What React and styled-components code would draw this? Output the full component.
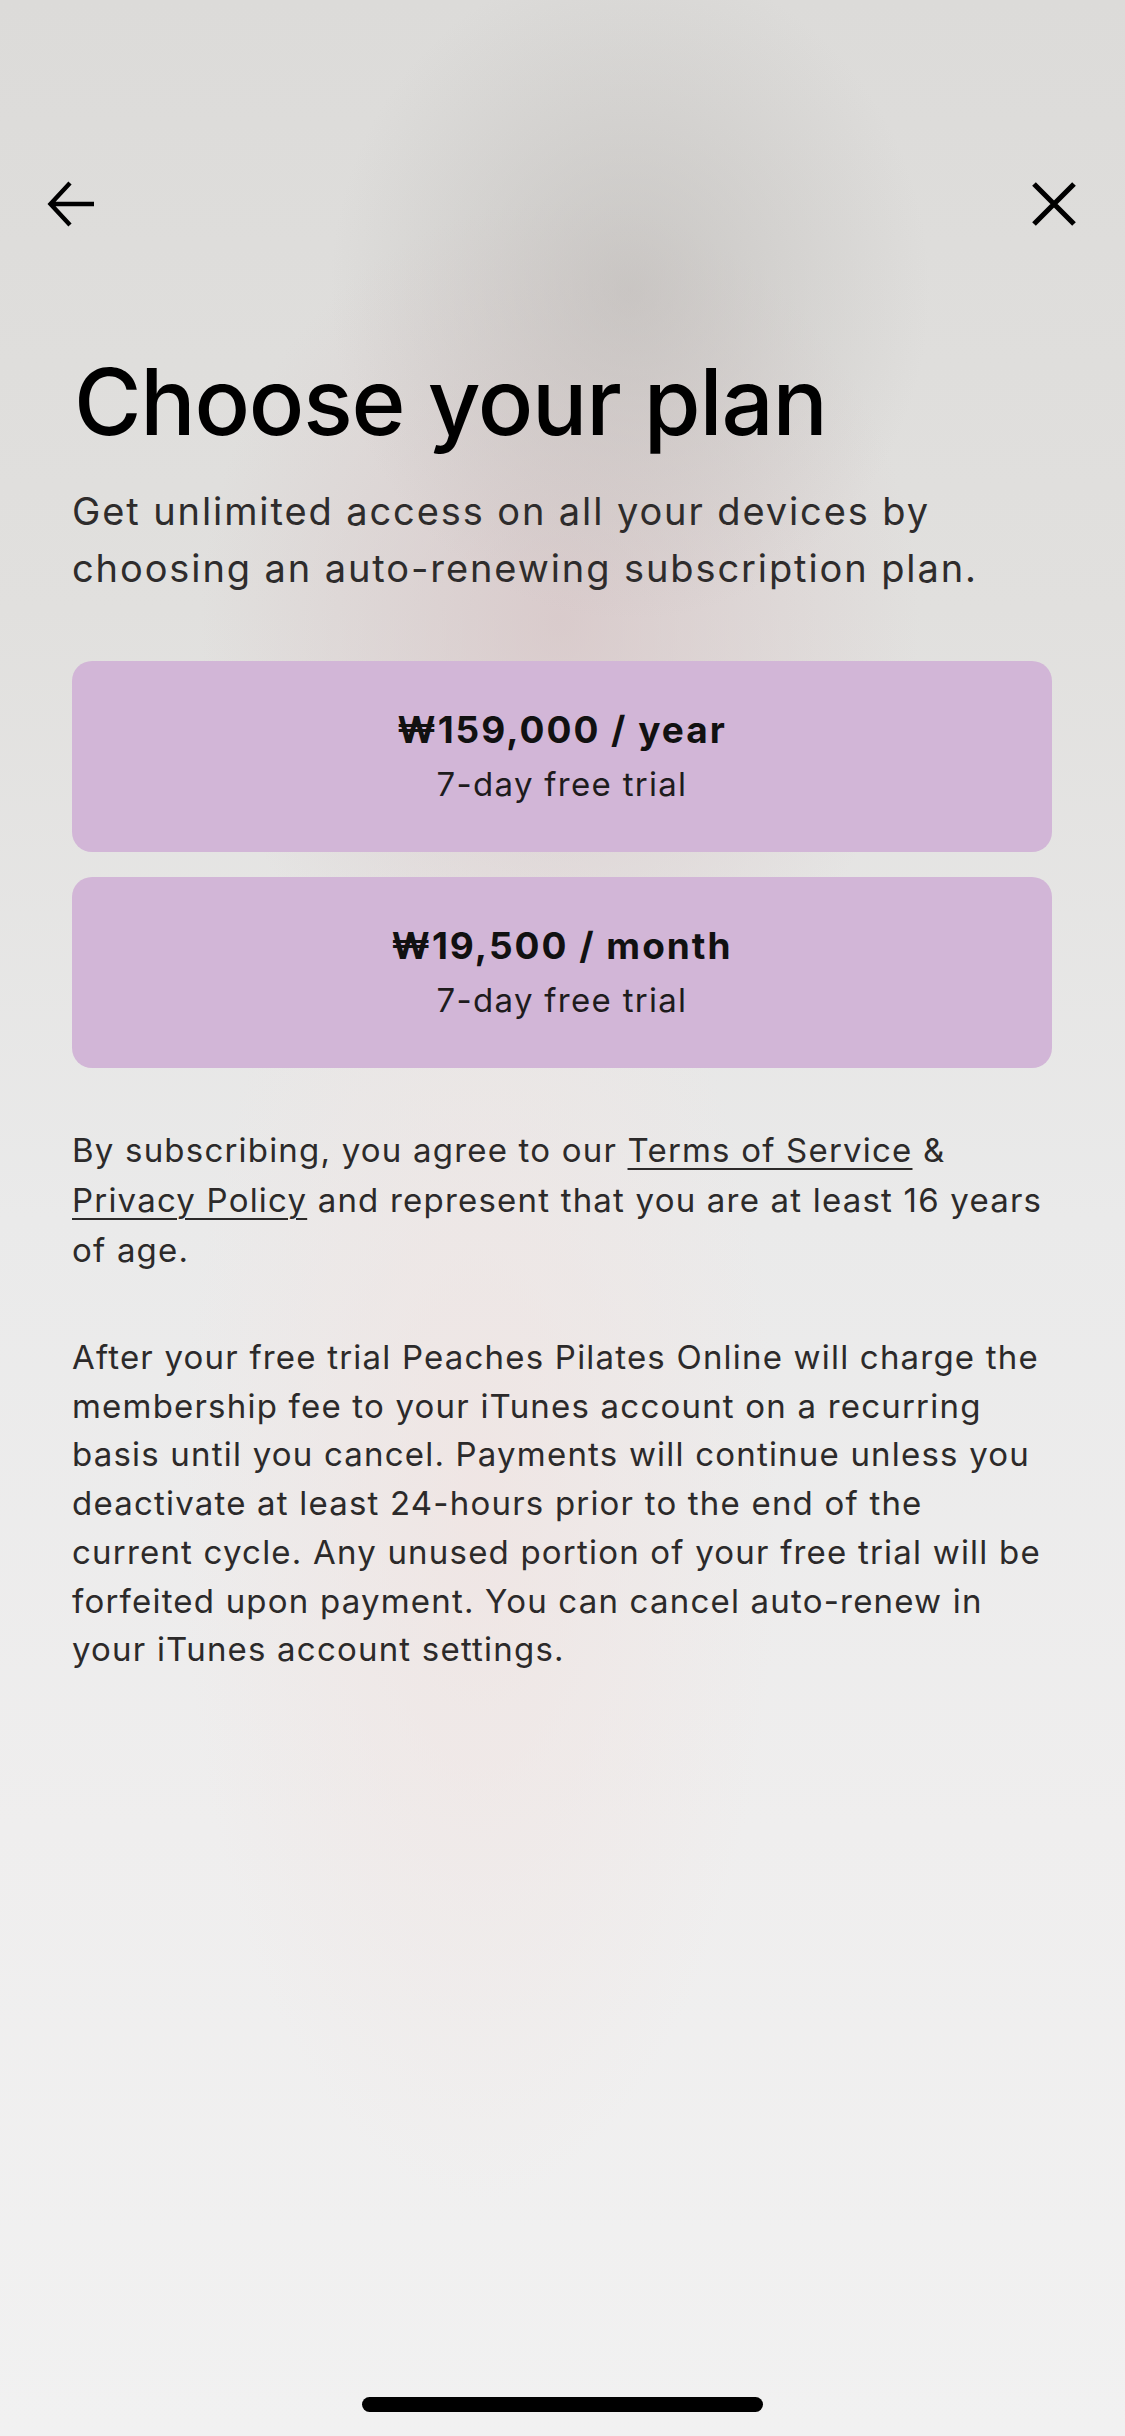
import React from 'react';
import styled, { createGlobalStyle } from 'styled-components';

const GlobalStyle = createGlobalStyle`
  html, body {
    margin: 0;
    padding: 0;
  }
  body {
    font-family: Inter, "Noto Sans", sans-serif;
    -webkit-font-smoothing: antialiased;
  }
`;

const plans = [
  { price: '₩159,000 / year', trial: '7-day free trial' },
  { price: '₩19,500 / month', trial: '7-day free trial' },
];

const BackIcon = () => (
  <svg width="50" height="50" viewBox="0 0 50 50" fill="none">
    <path d="M47 25H5M23 4L3.5 25L23 46" stroke="#000" strokeWidth="4.4" strokeLinejoin="miter" />
  </svg>
);

const CloseIcon = () => (
  <svg width="46" height="46" viewBox="0 0 46 46" fill="none">
    <path d="M3 3L43 43M43 3L3 43" stroke="#000" strokeWidth="5.2" />
  </svg>
);

const App = () => (
  <>
    <GlobalStyle />
    <Screen>
      <Header>
        <IconButton aria-label="Back">
          <BackIcon />
        </IconButton>
        <IconButton aria-label="Close">
          <CloseIcon />
        </IconButton>
      </Header>
      <Content>
        <Title>Choose your plan</Title>
        <Subtitle>
          Get unlimited access on all your devices by choosing an auto-renewing subscription plan.
        </Subtitle>
        <PlanList>
          {plans.map((p) => (
            <PlanCard key={p.price}>
              <Price>{p.price}</Price>
              <Trial>{p.trial}</Trial>
            </PlanCard>
          ))}
        </PlanList>
        <Legal>
          By subscribing, you agree to our <LegalLink>Terms of Service</LegalLink> &amp;{' '}
          <LegalLink>Privacy Policy</LegalLink> and represent that you are at least 16 years of age.
        </Legal>
        <Fine>
          After your free trial Peaches Pilates Online will charge the membership fee to your iTunes
          account on a recurring basis until you cancel. Payments will continue unless you deactivate
          at least 24-hours prior to the end of the current cycle. Any unused portion of your free
          trial will be forfeited upon payment. You can cancel auto-renew in your iTunes account
          settings.
        </Fine>
      </Content>
      <HomeIndicator />
    </Screen>
  </>
);

export default App;

const Screen = styled.div`
  width: 1125px;
  min-height: 2436px;
  box-sizing: border-box;
  display: flex;
  flex-direction: column;
  background:
    radial-gradient(ellipse 300px 330px at 630px 290px, rgba(184, 180, 177, 0.55), rgba(184, 180, 177, 0) 100%),
    radial-gradient(ellipse 360px 420px at 560px 620px, rgba(214, 194, 196, 0.7), rgba(214, 194, 196, 0) 100%),
    radial-gradient(ellipse 300px 700px at 480px 1500px, rgba(240, 228, 226, 0.8), rgba(240, 228, 226, 0) 100%),
    linear-gradient(180deg, #dcdbd9 0%, #e1e0de 25%, #eaeaea 50%, #efeeee 75%, #f1f1f1 100%);
`;

const Header = styled.div`
  display: flex;
  justify-content: space-between;
  align-items: center;
  height: 50px;
  margin-top: 179px;
  padding: 0 48px 0 47px;
`;

const IconButton = styled.button`
  display: flex;
  align-items: center;
  justify-content: center;
  padding: 0;
  border: 0;
  background: none;
`;

const Content = styled.main`
  display: flex;
  flex-direction: column;
  padding: 0 73px 0 72px;
`;

const Title = styled.h1`
  margin: 122px 0 0 2px;
  font-size: 92px;
  line-height: 101px;
  font-weight: 500;
  letter-spacing: -1.2px;
  color: #000;
`;

const Subtitle = styled.p`
  margin: 31px 0 0;
  font-size: 38px;
  line-height: 57px;
  letter-spacing: 1.9px;
  color: #2e2c2c;
`;

const PlanList = styled.div`
  display: flex;
  flex-direction: column;
  gap: 25px;
  margin-top: 64px;
`;

const PlanCard = styled.button`
  height: 191px;
  display: flex;
  flex-direction: column;
  align-items: center;
  justify-content: center;
  border: 0;
  border-radius: 20px;
  background: #d2b6d7;
  font-family: inherit;
  color: #111;
`;

const Price = styled.span`
  font-size: 37px;
  line-height: 46px;
  font-weight: 700;
  letter-spacing: 2px;
`;

const Trial = styled.span`
  font-size: 33px;
  line-height: 46px;
  margin-top: 8px;
  letter-spacing: 1.3px;
  color: #1e1c1d;
`;

const Legal = styled.p`
  margin: 57px 0 0;
  font-size: 33px;
  line-height: 50px;
  letter-spacing: 1.2px;
  color: #2c2a2a;
`;

const LegalLink = styled.a`
  color: inherit;
  text-decoration: underline;
  text-decoration-thickness: 2px;
  text-underline-offset: 6px;
`;

const Fine = styled.p`
  margin: 58px 0 0;
  font-size: 33px;
  line-height: 48.7px;
  letter-spacing: 1.2px;
  color: #2c2a2a;
`;

const HomeIndicator = styled.div`
  width: 401px;
  height: 15px;
  border-radius: 8px;
  background: #000;
  margin: auto auto 24px;
`;
